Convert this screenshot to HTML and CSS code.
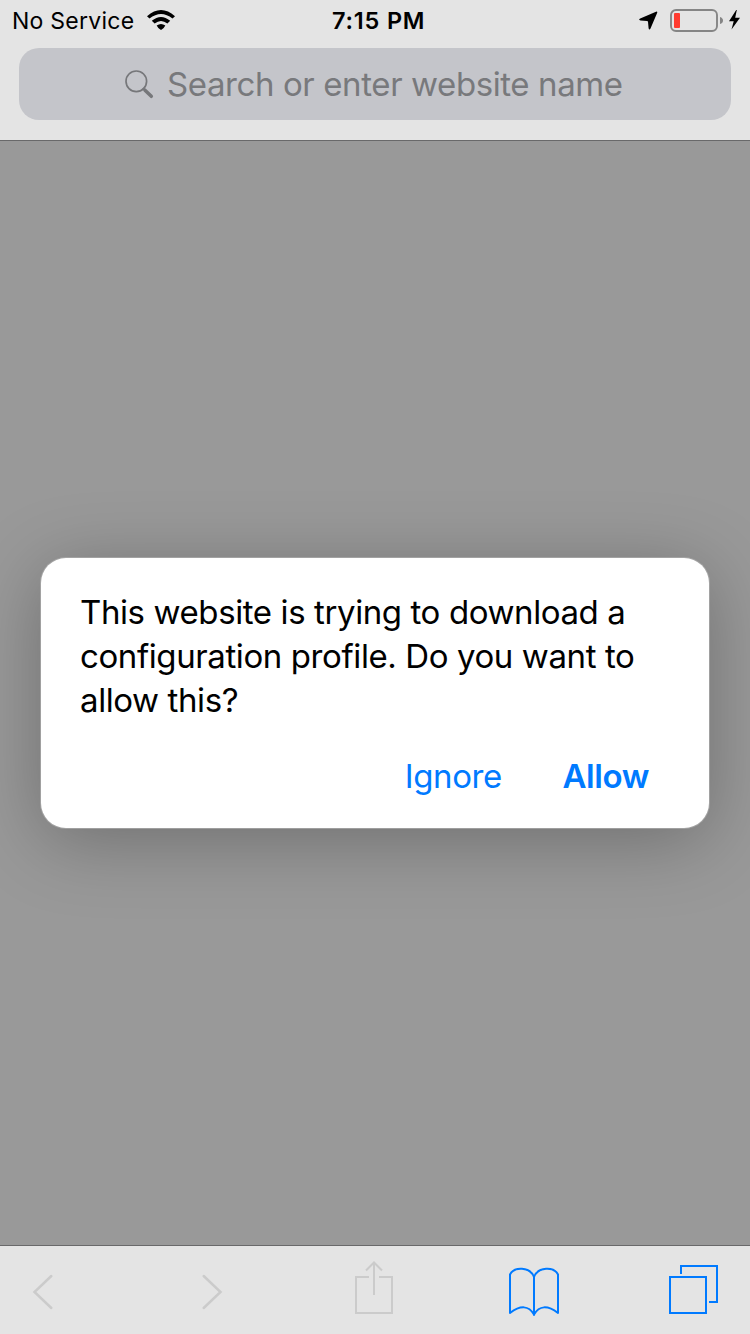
FILE: index.html
```html
<!DOCTYPE html>
<html lang="en">
<head>
<meta charset="utf-8">
<title>Safari</title>
<link rel="stylesheet" href="styles.css">
</head>
<body>
<div class="screen">
  <header class="top">
    <div class="status">
      <div class="status-left">
        <span class="carrier">No Service</span>
        <svg class="wifi" width="28" height="20" viewBox="0 0 28 20">
          <path d="M0 6.200Q14-6.200 28 6.200L25.500 8.600Q14-.7 2.500 8.600Z"/>
          <path d="M4.800 10.800Q14 3.200 23.200 10.800L20.400 13.500Q14 8.300 7.600 13.500Z"/>
          <path d="M9.700 15.600Q14 12.400 18.300 15.600Q17.500 18 14 20Q10.500 18 9.700 15.600Z"/>
        </svg>
      </div>
      <span class="time">7:15 PM</span>
      <div class="status-right">
        <svg class="arrow" width="19" height="19" viewBox="0 0 19 19"><path d="M16.400.9Q19-.1 18 2.200L11.500 17.600Q10.200 19.600 9.600 17.300L9 10.700Q8.900 9.900 8 9.900L1.500 9.500Q-1 8.800 1.200 7.500Z"/></svg>
        <svg class="battery" width="54" height="24" viewBox="0 0 54 24">
          <rect x="1" y="2" width="46" height="21" rx="5" fill="none" stroke="#858585" stroke-width="1.900"/>
          <rect x="4" y="5" width="6" height="15" rx="1" fill="#ff3b30"/>
          <path d="M50 9Q53 10 53 12.500T50 16Z" fill="#858585"/>
        </svg>
        <svg class="bolt" width="11" height="20" viewBox="0 0 11 20"><path d="M7.200 0L0 11.300H4.700L2.500 19.600L11 7.800H6.200L7.800 0Z"/></svg>
      </div>
    </div>
    <div class="search">
      <svg class="glass" width="29" height="29" viewBox="0 0 29 29" fill="none" stroke="#76777a" stroke-linecap="round"><circle cx="11.300" cy="11.300" r="10.300" stroke-width="1.700"/><path d="M18.400 18.600L20 20.200" stroke-width="2"/><path d="M20 20.200L26.300 26.300" stroke-width="3.500"/></svg>
      <span class="placeholder">Search or enter website name</span>
    </div>
  </header>
  <main class="page">
    <section class="dialog">
      <p class="message">This website is trying to download a<br>configuration profile. Do you want to<br>allow this?</p>
      <div class="actions"><span class="ignore">Ignore</span><span class="allow">Allow</span></div>
    </section>
  </main>
  <footer class="toolbar">
    <svg class="back" width="22" height="36" viewBox="0 0 22 36"><path d="M19.300 2L2.500 18L19.300 34"/></svg>
    <svg class="forward" width="22" height="36" viewBox="0 0 22 36"><path d="M2.700 2L19.500 18L2.700 34"/></svg>
    <svg class="share" width="38" height="53" viewBox="0 0 38 53"><path d="M14 16H1V52H37V16H24M19 34V2M11 9.500L19 1.500L27 9.500"/></svg>
    <svg class="book" width="50" height="50" viewBox="0 0 50 50"><path d="M25 10C21-.5 5-.5 1 7.500V46Q17 34 25 47.500Q33 34 49 46V7.500C45-.5 29-.5 25 10V48"/></svg>
    <svg class="tabs" width="49" height="49" viewBox="0 0 49 49"><path d="M1 12H37V48H1ZM12 9V1H48V37H40"/></svg>
  </footer>
</div>
</body>
</html>
```
FILE: styles.css
```css
* { box-sizing: border-box; }
body { margin: 0; font-family: Inter, "Liberation Sans", sans-serif; color: #000; }
svg { display: block; flex: none; }
.screen { width: 750px; height: 1334px; display: flex; flex-direction: column; overflow: hidden; background: #999; }
.top { height: 141px; background: #e4e4e4; border-bottom: 1px solid #69696a; position: relative; z-index: 1; }
.status { height: 40px; display: grid; grid-template-columns: 332px 1fr 112px; font-size: 23px; line-height: 42px; white-space: nowrap; }
.status-left { display: flex; padding-left: 12px; }
.carrier { width: 135px; letter-spacing: .25px; }
.wifi { margin-top: 10px; }
.time { font-weight: 600; font-size: 23.500px; letter-spacing: .8px; }
.status-right { display: flex; }
.arrow { margin: 11px 0 0 1px; }
.battery { margin: 8px 0 0 12px; }
.bolt { margin: 10px 0 0 5px; }
.search { height: 72px; margin: 8px 19px 0; padding-left: 106px; border-radius: 20px; background: #c4c5ca; display: flex; }
.glass { margin-top: 22px; }
.placeholder { margin-left: 13px; color: #78797c; font-size: 33px; line-height: 73px; letter-spacing: -.4px; white-space: nowrap; }
.page { flex: 1; padding: 417px 41px 0; }
.dialog { height: 270px; border-radius: 25px; background: #fff; padding: 32px 60px 0 39px; box-shadow: 0 0 0 1px rgba(175,175,175,.65), 0 12px 76px rgba(0,0,0,.28); }
.message { margin: 0; font-size: 33px; line-height: 44px; letter-spacing: -.4px; white-space: nowrap; }
.actions { display: flex; justify-content: flex-end; gap: 60.500px; margin-top: 32px; font-size: 33px; line-height: 44px; letter-spacing: -.4px; color: #007aff; }
.allow { font-weight: 600; }
.toolbar { height: 89px; background: #e4e4e4; border-top: 1px solid #69696a; position: relative; z-index: 1; display: flex; fill: none; stroke: #cbcbcb; stroke-width: 2; }
.back, .forward { margin-top: 28px; stroke-width: 2.5; stroke-linecap: round; }
.back { margin-left: 32px; }
.forward { margin-left: 147px; }
.share { margin: 15px 0 0 132px; }
.book { margin: 21px 0 0 116px; stroke: #007aff; stroke-linecap: round; stroke-linejoin: round; }
.tabs { margin: 19px 0 0 110px; stroke: #007aff; }
```
